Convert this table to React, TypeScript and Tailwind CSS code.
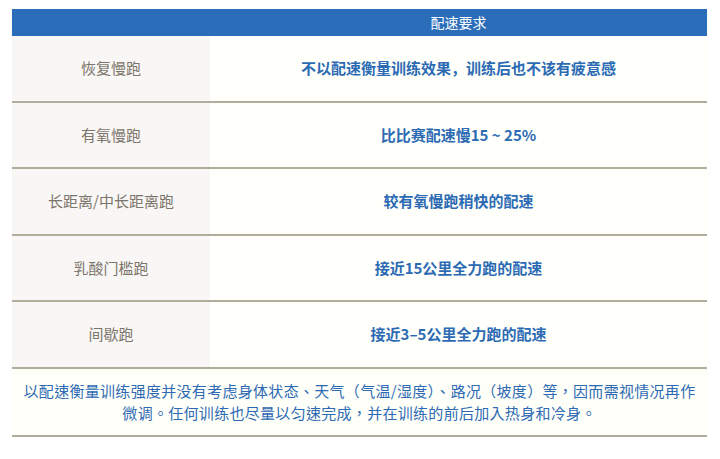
const rows = [
  { name: "恢复慢跑", pace: "不以配速衡量训练效果，训练后也不该有疲意感" },
  { name: "有氧慢跑", pace: "比比赛配速慢15 ~ 25%" },
  { name: "长距离/中长距离跑", pace: "较有氧慢跑稍快的配速" },
  { name: "乳酸门槛跑", pace: "接近15公里全力跑的配速" },
  { name: "间歇跑", pace: "接近3–5公里全力跑的配速" },
];

export default function App() {
  return (
    <div className="w-[720px] h-[459px] bg-white pt-[9px] pl-[12px] font-['Noto_Sans_CJK_SC',sans-serif]">
      <div className="w-[695px]">
        {/* Header */}
        <div className="grid grid-cols-[198px_1fr] h-[27px] bg-[#2b6db9] shadow-[0_1px_1px_rgba(0,0,0,0.15)]">
          <div />
          <div className="flex items-center justify-center text-[14px] text-white">配速要求</div>
        </div>

        {/* Rows */}
        {rows.map((r) => (
          <div key={r.name} className="grid grid-cols-[198px_1fr] h-[66.6px] border-b-2 border-[#b1ad9c]">
            <div className="flex items-center justify-center bg-[#f8f7f5] text-[15px] text-[#7c756b]">{r.name}</div>
            <div className="flex items-center justify-center bg-[#fffffb] text-[15px] font-bold text-[#2c6bb4]">{r.pace}</div>
          </div>
        ))}

        {/* Footnote */}
        <div className="h-[68px] flex items-center justify-center text-center bg-[#fffffa] border-b-2 border-[#b1ad9c] text-[15px] leading-[22px] tracking-[0.3px] text-[#2d6ab3] font-['Noto_Sans_CJK_TC',sans-serif]">
          <p>
            以配速衡量训练强度并没有考虑身体状态、天气（气温/湿度）、路况（坡度）等，因而需视情况再作
            <br />
            微调。任何训练也尽量以匀速完成，并在训练的前后加入热身和冷身。
          </p>
        </div>
      </div>
    </div>
  );
}
